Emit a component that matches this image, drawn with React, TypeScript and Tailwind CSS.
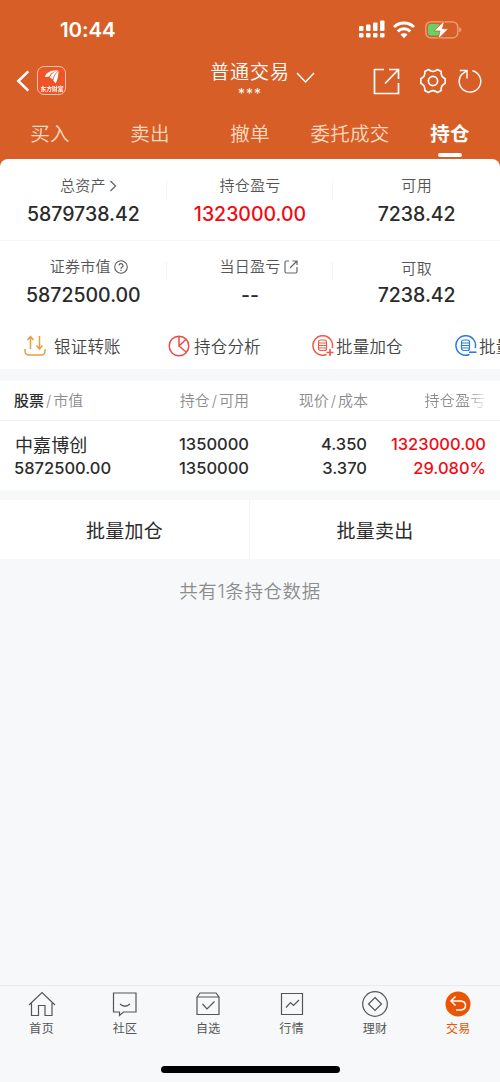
import type { ReactNode } from "react";

type Metric = {
  label: string;
  value: string;
  icon?: ReactNode;
  valueClass?: string;
  labelClass?: string;
};

const ChevronIcon = () => (
  <svg className="h-[12px] w-[8px]" viewBox="0 0 8 12" fill="none" stroke="#666" strokeWidth="1.3">
    <path d="M1.500 1 6.500 6 1.500 11" />
  </svg>
);

const HelpIcon = () => (
  <svg className="h-[14px] w-[14px]" viewBox="0 0 14 14" fill="none" stroke="#5a5a5a" strokeWidth="1.1">
    <circle cx="7" cy="7" r="6.3" />
    <path d="M5 5.600a2 2 0 1 1 3 1.700c-.7.400-1 .800-1 1.400M7 9.800v1.200" strokeWidth="1.2" />
  </svg>
);

const ShareIcon = () => (
  <svg className="h-[14px] w-[14px]" viewBox="0 0 14 14" fill="none" stroke="#666" strokeWidth="1.2">
    <path d="M5 1H2.500Q1 1 1 2.500v9Q1 13 2.500 13h9q1.500 0 1.500-1.500V7M8.500 1H13v4M13 1 6 8" />
  </svg>
);

const topMetrics: Metric[] = [
  { label: "总资产", value: "5879738.42", icon: <ChevronIcon />, labelClass: "pl-[10px]" },
  { label: "持仓盈亏", value: "1323000.00", valueClass: "text-[#f20a12]" },
  { label: "可用", value: "7238.42" }
];

const bottomMetrics: Metric[] = [
  { label: "证券市值", value: "5872500.00", icon: <HelpIcon />, labelClass: "pl-[11px]" },
  { label: "当日盈亏", value: "--", icon: <ShareIcon />, labelClass: "pl-[17px]" },
  { label: "可取", value: "7238.42", labelClass: "pt-[3px]" }
];

const tabs = ["买入", "卖出", "撤单", "委托成交", "持仓"];

function StatusBar() {
  return (
    <div className="flex h-[60px] items-center justify-between pr-[38px] pl-[60px]">
      <span className="pt-px text-[20.5px] leading-none font-semibold tracking-[-0.1px]">10:44</span>
      <div className="flex items-center">
        <svg className="h-[20px] w-[28px]" viewBox="0 0 28 20" fill="#fff">
          <rect x="2" y="6" width="4.500" height="5" rx="1" />
          <rect x="9" y="4.500" width="4.500" height="6.500" rx="1" />
          <rect x="16" y="2.500" width="4.500" height="8.500" rx="1" />
          <rect x="23" y="0.500" width="4.500" height="10.500" rx="1" />
          <rect x="2" y="13" width="4.500" height="4.500" rx="1.200" />
          <rect x="9" y="13" width="4.500" height="4.500" rx="1.200" />
          <rect x="16" y="13" width="4.500" height="4.500" rx="1.200" />
          <rect x="23" y="13" width="4.500" height="4.500" rx="1.200" />
        </svg>
        <svg className="ml-[7px] h-[18px] w-[24px]" viewBox="0 0 24 18" fill="none" stroke="#fff" strokeWidth="3">
          <path d="M2 6a14.500 14.500 0 0 1 20 0" />
          <path d="M5.700 10.300a9.300 9.300 0 0 1 12.600 0" />
          <path d="M12 17.300 8.500 13.600a5 5 0 0 1 7 0Z" fill="#fff" stroke="none" />
        </svg>
        <svg className="ml-[8px] h-[20px] w-[38px]" viewBox="0 0 38 20">
          <rect x="1.800" y="1.800" width="32" height="16" rx="5" fill="none" stroke="#eda57f" strokeWidth="1.300" />
          <path d="M35.300 7q2 1 2 2.800t-2 2.800Z" fill="#eda57f" />
          <rect x="4" y="4" width="12" height="11.500" rx="2.500" fill="#62d367" />
          <path d="M20.500.8 10 11h6L14 19.200 24.500 8.800h-6Z" fill="#fff" stroke="#d75f27" strokeWidth="0.800" />
        </svg>
      </div>
    </div>
  );
}

function NavBar() {
  return (
    <div className="grid h-[46px] grid-cols-[150px_1fr_150px]">
      <div className="flex items-center pb-[5px] pl-[16px]">
        <svg className="h-[22px] w-[14px]" viewBox="0 0 14 22" fill="none" stroke="#fff" strokeWidth="2.500">
          <path d="M12.300 1.300 2.300 11l10 9.700" />
        </svg>
        <div className="ml-[7px] flex h-[29px] w-[29px] flex-col items-center rounded-[7px] border border-[#f6c4ab] bg-[#ef5428]">
          <svg className="mt-[2px] h-[16px] w-[16px] shrink-0" viewBox="0 0 17 16" fill="#fff">
            <path d="M1 8C2 3.500 7 .5 15 .8 10.500 2 7 4 5.500 7.500Z" />
            <path d="M6.200 8.500C8 4.500 11 2 15.300 1.200 12 4 10.500 6.500 9.200 10.500Z" />
            <path d="M9.800 11.500C11 7 12.500 4 15.600 1.500 14.800 5 15.800 9 12.200 14.800Z" />
          </svg>
          <span className="h-[8px] origin-top scale-50 text-[11.5px] leading-[16px] font-bold whitespace-nowrap">东方财富</span>
        </div>
      </div>
      <div className="flex flex-col items-center">
        <div className="flex h-[24px] items-center pl-[25px]">
          <span className="text-[19px] leading-none font-[350] tracking-[0.9px]">普通交易</span>
          <svg className="mt-[12px] ml-[6px] h-[12px] w-[19px]" viewBox="0 0 19 12" fill="none" stroke="#fff" strokeWidth="1.500">
            <path d="m1 1 8.500 9L18 1" />
          </svg>
        </div>
        <span className="h-[12px] text-[14px] leading-[19px] tracking-[1px]">***</span>
      </div>
      <div className="flex items-center pb-[4px] pl-[23px]">
        <svg className="h-[27px] w-[27px]" viewBox="0 0 27 27" fill="none" stroke="#fff" strokeWidth="1.700">
          <path d="M11 1.500H1.500V25.500h24V15M16 1.500h9.500V11M25.500 1.500 12 15.500" />
        </svg>
        <svg className="ml-[20px] h-[26px] w-[26px]" viewBox="0 0 26 26" fill="none" stroke="#fff" strokeWidth="1.700" strokeLinejoin="round">
          <path d="M8.500 1.500 10.500 2.800Q13 4 15.500 2.800L17.500 1.500 21.200 3.600V6Q21.500 8.700 24 10L25.200 10.800V15.200L24 16Q21.500 17.300 21.200 20V22.400L17.500 24.500 15.500 23.200Q13 22 10.500 23.200L8.500 24.500 4.800 22.400V20Q4.500 17.300 2 16L.8 15.200V10.800L2 10Q4.500 8.700 4.800 6V3.600Z" />
          <circle cx="13" cy="13" r="4.600" />
        </svg>
        <svg className="ml-[12px] h-[24px] w-[24px]" viewBox="0 0 24 24" fill="none" stroke="#fff" strokeWidth="1.400">
          <path d="M14.500 1.800A10.800 10.800 0 1 1 4.500 4.500" />
          <path d="M1.800 1.500h7.200v8M9 1.500 4.500 5" />
        </svg>
      </div>
    </div>
  );
}

function TabRow() {
  return (
    <div className="grid h-[53px] grid-cols-5">
      {tabs.map((tab) => {
        const active = tab === "持仓";
        return (
          <div key={tab} className="flex flex-col items-center pt-[13px]">
            <span
              className={`text-[19.5px] leading-[30px] tracking-[0.3px] whitespace-nowrap ${
                active ? "font-bold text-white" : "font-[350] text-[#ffd9c0]"
              }`}
            >
              {tab}
            </span>
            {active && <span className="mt-[4px] h-[4px] w-[24px] rounded-full bg-white" />}
          </div>
        );
      })}
    </div>
  );
}

function MetricRow({ items, className }: { items: Metric[]; className: string }) {
  return (
    <div className={`grid grid-cols-3 ${className}`}>
      {items.map((item, i) => (
        <div key={item.label} className="relative flex flex-col items-center">
          <div className={`flex h-[22px] items-center gap-[3px] text-[15px] leading-[22px] font-[350] tracking-[0.3px] text-[#555] ${item.labelClass ?? ""}`}>
            {item.label}
            {item.icon}
          </div>
          <div className={`mt-[4px] text-[19.5px] leading-[26px] font-medium ${item.valueClass ?? "text-[#2b2b2b]"}`}>
            {item.value}
          </div>
          {i < 2 && <span className="absolute top-[6px] right-0 h-[18px] w-px bg-[#f4f4f6]" />}
        </div>
      ))}
    </div>
  );
}

function StackIcon({ color, minus }: { color: string; minus?: boolean }) {
  return (
    <svg className="h-[22px] w-[22px]" viewBox="0 0 22 22" fill="none" stroke={color} strokeWidth="1.200">
      <path d="M14.500 19.500A9.800 9.800 0 1 1 20.200 13" strokeWidth="1.500" />
      <rect x="6.500" y="5" width="8" height="10.500" rx="2" />
      <path d="M6.500 8h8M6.500 10.500h8M6.500 13h8" />
      <path d={minus ? "M14 17.200h7.500" : "M14.500 17.500h7M18 14v7"} strokeWidth="1.600" />
    </svg>
  );
}

function Actions() {
  return (
    <div className="flex h-[49px] items-center overflow-hidden pt-[3px] text-[16.5px] font-[350] tracking-[0.2px] whitespace-nowrap text-[#444]">
      <div className="flex w-[144px] shrink-0 items-center gap-[8px] pl-[24px]">
        <svg className="h-[22px] w-[22px]" viewBox="0 0 22 22" fill="none" stroke="#e5a044" strokeWidth="1.500">
          <path d="M1 14v2q0 4 4 4h12q4 0 4-4v-2M6.500 14V1.500M3.500 5l3-3.500 3 3.500M15.500 1v13M12.500 10.500l3 3.500 3-3.500" />
        </svg>
        <span className="pt-[2px]">银证转账</span>
      </div>
      <div className="flex w-[144px] shrink-0 items-center gap-[4px] pl-[24px]">
        <svg className="h-[22px] w-[22px]" viewBox="0 0 22 22" fill="none" stroke="#ec4b45" strokeWidth="1.500">
          <circle cx="11" cy="11" r="9.800" />
          <path d="M11 1v10l7.500 6.300M11 11l7.300-7" />
        </svg>
        <span className="pt-[2px]">持仓分析</span>
      </div>
      <div className="flex w-[143px] shrink-0 items-center gap-[2px] pl-[24px]">
        <StackIcon color="#ee5b46" />
        <span className="pt-[2px]">批量加仓</span>
      </div>
      <div className="flex w-[144px] shrink-0 items-center gap-[2px] pl-[24px]">
        <StackIcon color="#2c7be5" minus />
        <span className="pt-[2px]">批量</span>
      </div>
    </div>
  );
}

function Holdings() {
  return (
    <>
      <div className="grid h-[40px] grid-cols-[130px_119px_118px_1fr] items-center border-b border-[#f0f0f2] pt-px pr-[14px] pl-[14px] text-right text-[15px] font-[350] text-[#8c8c8c]">
        <div className="text-left">
          <span className="font-medium text-[#2b2b2b]">股票</span>
          <span className="mx-[2px]">/</span>市值
        </div>
        <div className="pr-[14px]">持仓<span className="mx-[2px]">/</span>可用</div>
        <div className="pr-[13px]">现价<span className="mx-[2px]">/</span>成本</div>
        <div>
          <span className="bg-gradient-to-r from-[#8c8c8c] from-70% to-[#f4f4f4] bg-clip-text tracking-[0.4px] text-transparent">持仓盈亏</span>
        </div>
      </div>
      <div className="grid h-[69px] grid-cols-[130px_105px_118px_1fr] content-center px-[14px] text-right text-[16.5px] leading-[24px] font-medium text-[#2b2b2b]">
        <div className="pt-[3px] pl-px text-left text-[18px] leading-[21px] font-normal tracking-[0.1px]">中嘉博创</div>
        <div>1350000</div>
        <div>4.350</div>
        <div className="text-[#f20a12]">1323000.00</div>
        <div className="text-left">5872500.00</div>
        <div>1350000</div>
        <div>3.370</div>
        <div className="text-[#f20a12]">29.080%</div>
      </div>
    </>
  );
}

const navItems: { label: string; icon: ReactNode }[] = [
  { label: "首页", icon: <path d="M1 14 14 1.500 27 14M3.500 12v12.500h7v-10h6.500v10h7V12" /> },
  { label: "社区", icon: <path d="M2.500 2h22.500v19H12.500L8.500 24.500V21h-6ZM9 13q5 4.500 10 0" /> },
  { label: "自选", icon: <path d="M3 6 6 2h16l3 4v17.500H3ZM3 6H25M8.500 13l4.500 5 7.500-7.500" /> },
  { label: "行情", icon: <path d="M3.500 2.500h21v21h-21ZM8 16.500l4.500-5 3 3 5.500-5.500" /> },
  {
    label: "理财",
    icon: (
      <>
        <circle cx="14" cy="13" r="12.300" />
        <path d="m14 6.500 6.500 6.500-6.500 6.500L7.500 13Z" />
      </>
    )
  },
  {
    label: "交易",
    icon: (
      <>
        <circle cx="14" cy="13" r="12.500" fill="#e95505" stroke="none" />
        <path d="M11.500 5.500 7 10l4.500 4.500M7 10h10q4.500.5 4.500 4.500T17 19h-5" stroke="#fff" strokeWidth="1.500" />
      </>
    )
  }
];

function BottomNav() {
  return (
    <nav className="flex h-[97px] flex-col border-t border-[#eaebed]">
      <div className="grid grid-cols-6">
        {navItems.map(({ label, icon }) => (
          <div key={label} className={`flex flex-col items-center pt-[5px] ${label === "交易" ? "text-[#e95505]" : "text-[#555]"}`}>
            <svg className="h-[26px] w-[28px]" viewBox="0 0 28 26" fill="none" stroke="currentColor" strokeWidth="1.200">
              {icon}
            </svg>
            <span className="mt-[4px] text-[12px] leading-[16px] tracking-[0.3px]">{label}</span>
          </div>
        ))}
      </div>
      <div className="mx-auto mt-auto mb-[9px] h-[7px] w-[179px] rounded-full bg-black" />
    </nav>
  );
}

export default function App() {
  return (
    <main className="flex h-[1082px] w-[500px] flex-col overflow-hidden bg-[#f7f8fa] font-[Inter,'Noto_Sans_CJK_SC',sans-serif]">
      <div className="bg-[#d75f27] text-white">
        <StatusBar />
        <NavBar />
        <TabRow />
        <section className="rounded-t-[8px] bg-white">
          <MetricRow items={topMetrics} className="h-[82px] border-b border-[#f5f5f7] pt-[16px]" />
          <MetricRow items={bottomMetrics} className="h-[79px] pt-[15px]" />
          <Actions />
        </section>
      </div>
      <section className="mt-[12px] bg-white">
        <Holdings />
      </section>
      <div className="mt-[10px] grid h-[59px] grid-cols-2 items-center bg-white text-center text-[19px] tracking-[0.3px] text-[#2b2b2b]">
        <button type="button" className="h-full border-r border-[#f3f4f6] pt-[5px]">批量加仓</button>
        <button type="button" className="h-full pt-[5px]">批量卖出</button>
      </div>
      <p className="mt-[18px] text-center text-[18.5px] leading-[28px] font-[350] tracking-[0.6px] text-[#8c8c8c]">共有1条持仓数据</p>
      <div className="flex-1" />
      <BottomNav />
    </main>
  );
}
